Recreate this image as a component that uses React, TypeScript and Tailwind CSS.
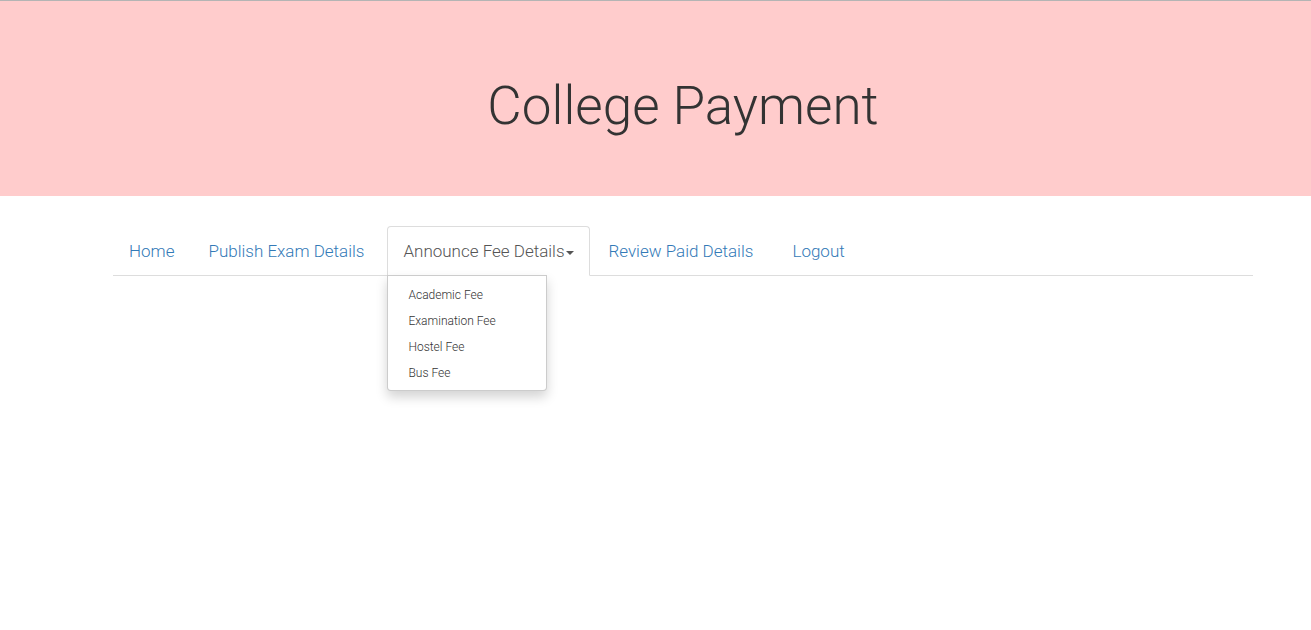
const feeTypes = ["Academic Fee", "Examination Fee", "Hostel Fee", "Bus Fee"];

const tabLink =
  "block whitespace-nowrap rounded-t border border-transparent px-[15px] py-[10px] text-[17px] leading-[28px] text-[#337ab7]";

export default function App() {
  return (
    <div className="min-h-screen bg-white font-['Roboto','Liberation_Sans',sans-serif] font-light text-[#333333]">
      <header className="border-t border-[#b4b4b4] bg-[#ffcccc] pt-[69px] pb-[54px] pl-[55px]">
        <h1 className="text-center text-[53px] leading-[72px]">College Payment</h1>
      </header>

      <nav className="mt-[30px] mr-[58px] ml-[113px] border-b border-[#dddddd]" aria-label="Main">
        <ul className="-mb-px flex gap-[2px]">
          <li className="min-w-[77px]">
            <a href="#home" className={tabLink}>Home</a>
          </li>
          <li className="min-w-[193px]">
            <a href="#publish" className={tabLink}>Publish Exam Details</a>
          </li>
          <li className="relative min-w-[203px]">
            <button
              type="button"
              aria-haspopup="menu"
              aria-expanded="true"
              className="flex w-full items-center whitespace-nowrap rounded-t border border-[#dddddd] border-b-transparent bg-white px-[15px] py-[10px] text-left text-[17px] leading-[28px] text-[#555555]"
            >
              Announce Fee Details
              <span className="ml-auto mt-1 border-x-4 border-t-4 border-x-transparent border-t-[#555555]" />
            </button>
            <ul
              role="menu"
              className="absolute top-full left-0 z-10 -mt-px w-[160px] rounded-b border border-black/20 bg-white pt-[6px] pb-1 shadow-[0_6px_12px_rgba(0,0,0,0.175)]"
            >
              {feeTypes.map((fee) => (
                <li key={fee} role="none">
                  <a href="#fee" role="menuitem" className="block px-5 py-[3px] text-[12px] leading-[20px]">
                    {fee}
                  </a>
                </li>
              ))}
            </ul>
          </li>
          <li className="min-w-[182px]">
            <a href="#review" className={tabLink}>Review Paid Details</a>
          </li>
          <li>
            <a href="#logout" className={tabLink}>Logout</a>
          </li>
        </ul>
      </nav>
    </div>
  );
}
